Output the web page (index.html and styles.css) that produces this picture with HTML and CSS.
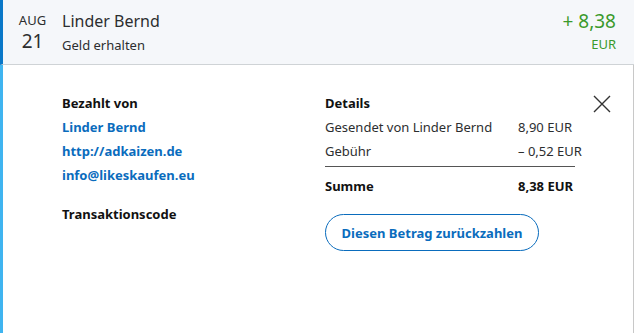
FILE: index.html
```html
<!DOCTYPE html>
<html lang="de">
<head>
<meta charset="utf-8">
<link rel="stylesheet" href="styles.css">
</head>
<body>
<div class="card">
  <div class="head">
    <div class="date"><div class="mon">AUG</div><div class="day">21</div></div>
    <div class="who"><div class="name">Linder Bernd</div><div class="sub">Geld erhalten</div></div>
    <div class="amt"><div class="val">+ 8,38</div><div class="cur">EUR</div></div>
  </div>
  <div class="body">
    <div class="col-left">
      <div class="h">Bezahlt von</div>
      <div class="link">Linder Bernd</div>
      <div class="link">http://adkaizen.de</div>
      <div class="link">info@likeskaufen.eu</div>
      <div class="h code">Transaktionscode</div>
    </div>
    <div class="col-right">
      <div class="h">Details</div>
      <div class="rows">
        <div class="lbl">Gesendet von Linder Bernd</div><div class="num">8,90 EUR</div>
        <div class="lbl">Gebühr</div><div class="num">– 0,52 EUR</div>
        <div class="rule"></div>
        <div class="lbl sum">Summe</div><div class="num sum">8,38 EUR</div>
      </div>
      <button class="btn">Diesen Betrag zurückzahlen</button>
    </div>
    <div class="close">
      <svg width="18" height="18" viewBox="0 0 18 18"><path d="M1 1L17 17M17 1L1 17" stroke="#333" stroke-width="1.4" fill="none"/></svg>
    </div>
  </div>
</div>
</body>
</html>
```
FILE: styles.css
```css
* { box-sizing: border-box; }
html, body { margin: 0; padding: 0; background: #fff; }
body { font-family: "Noto Sans", "Open Sans", sans-serif; color: #2c2e2f; width: 639px; height: 333px; overflow: hidden; }
.card { width: 634px; height: 333px; border-left: 3px solid #3fb4f0; display: flex; flex-direction: column; }
.head { height: 65px; background: #f5f7fa; border-bottom: 1px solid #cfd3d6; display: flex; align-items: flex-start; margin-left: -3px; border-left: 3px solid #0a78c8; }
.date { width: 59px; text-align: center; padding-top: 12px; color: #2c2e2f; }
.mon { font-size: 13px; line-height: 16px; }
.day { font-size: 19px; line-height: 20px; margin-top: 3px; }
.who { flex: 1; padding-top: 10px; }
.name { font-size: 16px; line-height: 22px; }
.sub { font-size: 13px; line-height: 18px; margin-top: 4px; }
.amt { text-align: right; padding-right: 18px; padding-top: 8px; color: #3a9a2c; }
.val { font-size: 19px; line-height: 26px; }
.cur { font-size: 13px; line-height: 16px; margin-top: 2px; }
.body { flex: 1; display: flex; border-right: 1px solid #c8c8c8; padding-left: 59px; padding-top: 26px; font-size: 13px; }
.col-left { width: 263px; }
.col-right { width: 268px; }
.h { font-weight: 700; color: #111; line-height: 24px; }
.link { font-weight: 700; color: #0a6cbd; line-height: 24px; }
.code { margin-top: 15px; }
.rows { display: grid; grid-template-columns: 193px 75px; }
.lbl, .num { line-height: 24px; color: #2c2e2f; white-space: nowrap; }
.rule { grid-column: 1 / -1; width: 250px; height: 1px; background: #555; margin-top: 3px; }
.sum { font-weight: 700; color: #111; padding-top: 7px; }
.btn { margin-top: 16px; width: 214px; height: 37px; border: 1px solid #0a6cbd; border-radius: 19px; background: #fff; color: #0a6cbd; font-family: inherit; font-size: 13px; font-weight: 700; padding: 0; }
.close { flex: 1; padding-top: 4px; }
.close svg { display: block; }
```
